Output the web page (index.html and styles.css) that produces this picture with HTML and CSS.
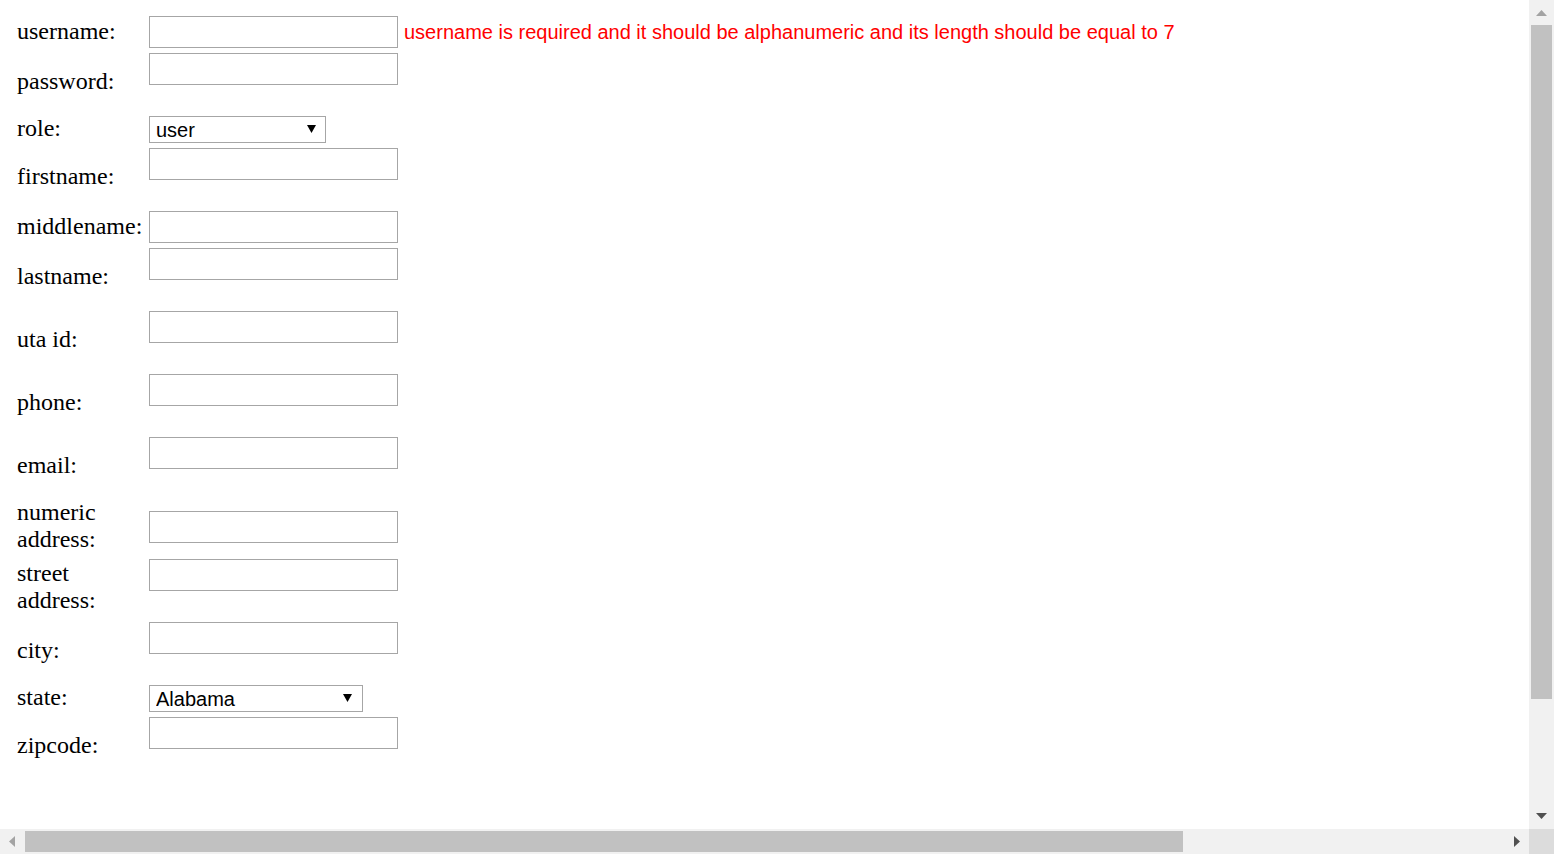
FILE: index.html
```html
<!DOCTYPE html>
<html lang="en">
<head>
<meta charset="utf-8">
<title>Register</title>
<link rel="stylesheet" href="styles.css">
</head>
<body>
<div class="window">
  <div class="viewport">
    <form class="form">
      <label class="lbl" for="username">username:</label>
      <div class="field field-inline">
        <input class="txt" id="username" type="text">
        <span class="error">username is required and it should be alphanumeric and its length should be equal to 7</span>
      </div>

      <label class="lbl" for="password">password:</label>
      <div class="field"><input class="txt" id="password" type="password"><div class="slot"></div></div>

      <label class="lbl" for="role">role:</label>
      <div class="field">
        <span class="sel sel-role"><select id="role"><option>user</option><option>admin</option></select><svg class="caret" width="9" height="8" viewBox="0 0 9 8"><polygon points="0,0 9,0 4.5,8" fill="#000"/></svg></span>
      </div>

      <label class="lbl" for="firstname">firstname:</label>
      <div class="field"><input class="txt" id="firstname" type="text"><div class="slot"></div></div>

      <label class="lbl" for="middlename">middlename:</label>
      <div class="field"><input class="txt" id="middlename" type="text"></div>

      <label class="lbl" for="lastname">lastname:</label>
      <div class="field"><input class="txt" id="lastname" type="text"><div class="slot"></div></div>

      <label class="lbl" for="utaid">uta id:</label>
      <div class="field"><input class="txt" id="utaid" type="text"><div class="slot"></div></div>

      <label class="lbl" for="phone">phone:</label>
      <div class="field"><input class="txt" id="phone" type="text"><div class="slot"></div></div>

      <label class="lbl" for="email">email:</label>
      <div class="field"><input class="txt" id="email" type="text"><div class="slot"></div></div>

      <label class="lbl" for="numaddr">numeric address:</label>
      <div class="field"><input class="txt" id="numaddr" type="text"></div>

      <label class="lbl" for="straddr">street address:</label>
      <div class="field"><input class="txt" id="straddr" type="text"><div class="slot"></div></div>

      <label class="lbl" for="city">city:</label>
      <div class="field"><input class="txt" id="city" type="text"><div class="slot"></div></div>

      <label class="lbl" for="state">state:</label>
      <div class="field">
        <span class="sel sel-state"><select id="state"><option>Alabama</option><option>Alaska</option></select><svg class="caret" width="9" height="8" viewBox="0 0 9 8"><polygon points="0,0 9,0 4.5,8" fill="#000"/></svg></span>
      </div>

      <label class="lbl" for="zipcode">zipcode:</label>
      <div class="field"><input class="txt" id="zipcode" type="text"><div class="slot"></div></div>
    </form>
  </div>

  <div class="vbar">
    <div class="btn"><svg width="25" height="25" viewBox="0 0 25 25"><polygon points="12.5,10 7,16 18,16" fill="#a3a3a3"/></svg></div>
    <div class="vtrack"><div class="vthumb"></div></div>
    <div class="btn"><svg width="25" height="25" viewBox="0 0 25 25"><polygon points="7,9 18,9 12.5,15" fill="#505050"/></svg></div>
  </div>

  <div class="hbar">
    <div class="btn"><svg width="25" height="25" viewBox="0 0 25 25"><polygon points="9,12.5 15,7 15,18" fill="#a3a3a3"/></svg></div>
    <div class="htrack"><div class="hthumb"></div></div>
    <div class="btn"><svg width="25" height="25" viewBox="0 0 25 25"><polygon points="10,7 10,18 16,12.5" fill="#505050"/></svg></div>
  </div>

  <div class="corner"></div>
</div>
</body>
</html>
```

FILE: styles.css
```css
html, body {
  margin: 0;
  padding: 0;
  background: #fff;
}

.window {
  width: 1554px;
  height: 854px;
  display: grid;
  grid-template-columns: 1529px 25px;
  grid-template-rows: 829px 25px;
  overflow: hidden;
}

.viewport {
  overflow: hidden;
  background: #fff;
}

.form {
  display: grid;
  grid-template-columns: 132px auto;
  justify-content: start;
  row-gap: 5px;
  padding: 16px 0 0 17px;
  font-family: "Liberation Serif", "Times New Roman", serif;
  font-size: 24px;
  color: #000;
}

.lbl {
  align-self: center;
  line-height: normal;
  margin-top: -1px;
  margin-bottom: 1px;
}

.field {
  align-self: center;
}

.field-inline {
  display: flex;
  align-items: center;
  gap: 6px;
}

.txt {
  display: block;
  box-sizing: border-box;
  width: 249px;
  height: 32px;
  margin: 0;
  border: 1px solid #a6a6a6;
  background: #fff;
  font-family: "Liberation Sans", Arial, sans-serif;
  font-size: 20px;
  padding: 1px 3px;
}

.slot {
  height: 26px;
}

.error {
  color: #ff0000;
  font-family: "Liberation Sans", Arial, sans-serif;
  font-size: 20px;
  white-space: nowrap;
}

.sel {
  position: relative;
  display: block;
  width: fit-content;
}

.sel select {
  display: block;
  box-sizing: border-box;
  height: 27px;
  margin: 0;
  padding: 0 0 0 6px;
  border: 1px solid #a6a6a6;
  border-radius: 0;
  background: #fff;
  color: #000;
  font-family: "Liberation Sans", Arial, sans-serif;
  font-size: 20px;
  -webkit-appearance: none;
  appearance: none;
}

.sel-role select { width: 177px; }
.sel-state select { width: 214px; }

.caret {
  position: absolute;
  top: 9px;
  right: 10px;
  pointer-events: none;
}

.sel-state .caret { right: 11px; }

/* fake browser scrollbars */
.vbar {
  background: #f1f1f1;
  display: flex;
  flex-direction: column;
}

.hbar {
  background: #f1f1f1;
  display: flex;
}

.btn {
  width: 25px;
  height: 25px;
  flex: none;
}

.btn svg { display: block; }

.vtrack {
  flex: 1;
  padding: 0 2px;
}

.vthumb {
  height: 674px;
  background: #c1c1c1;
}

.htrack {
  flex: 1;
  padding: 2px 0;
}

.hthumb {
  width: 1158px;
  height: 21px;
  background: #c1c1c1;
}

.corner {
  background: #dcdcdc;
}
```
